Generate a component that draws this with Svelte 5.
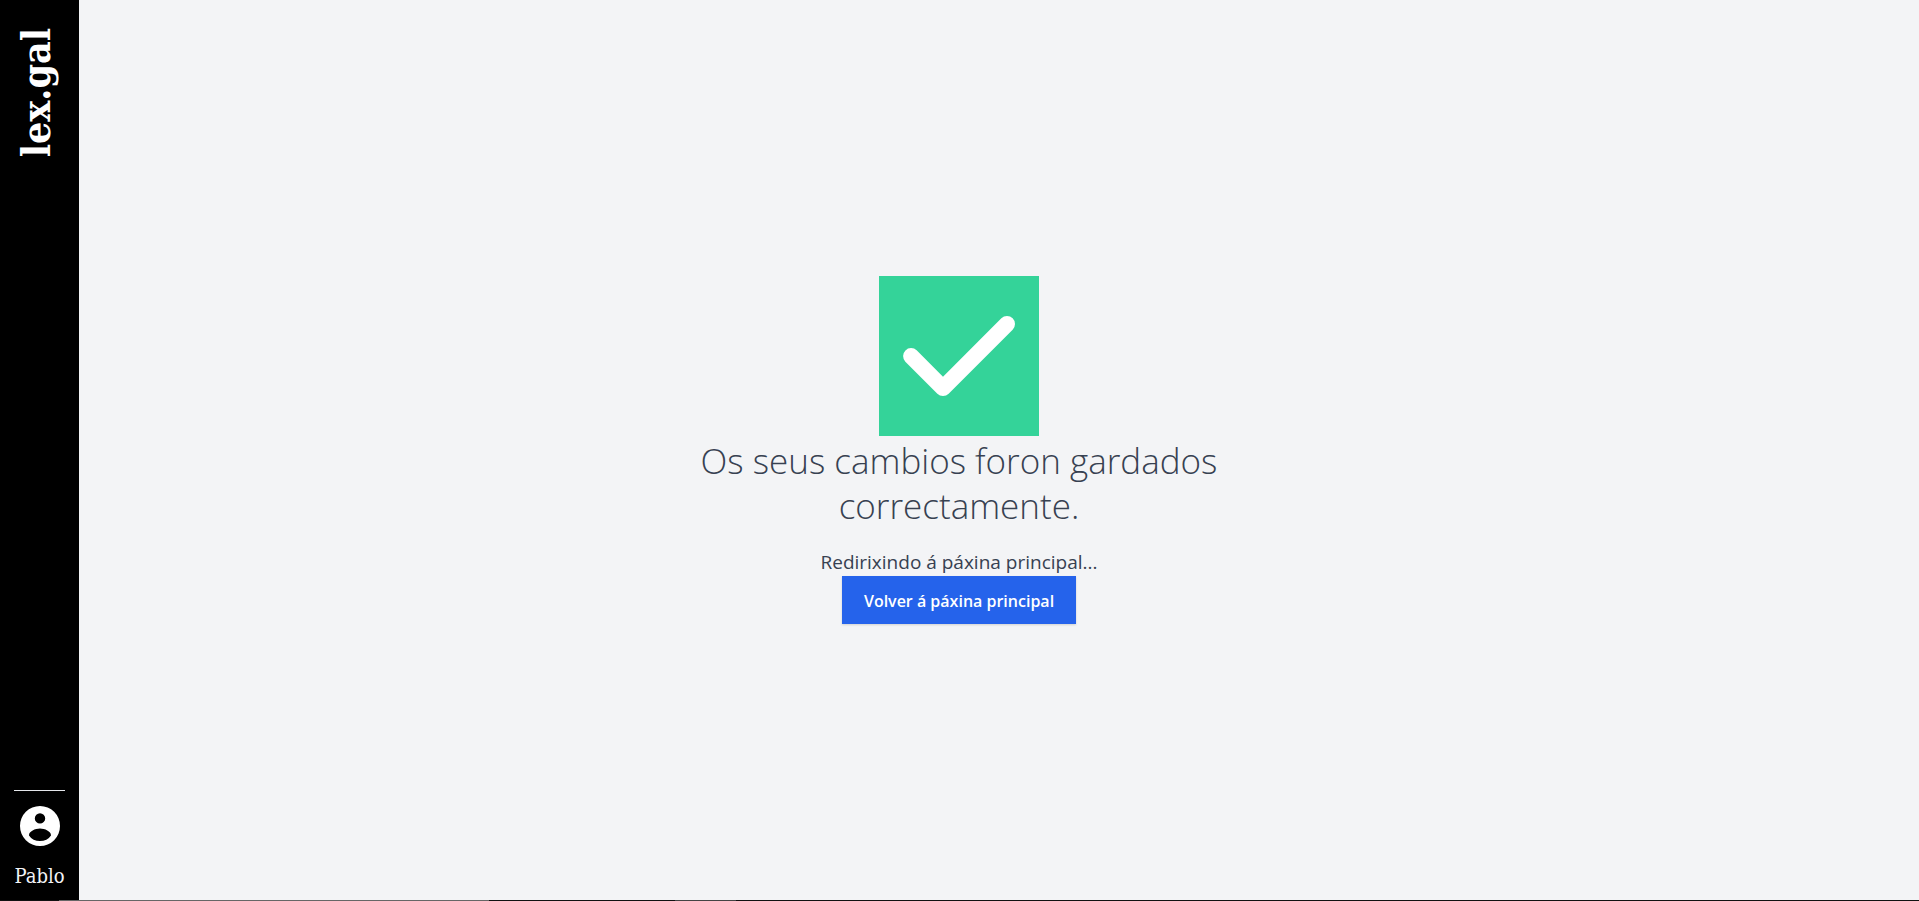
<script>
  const user = 'Pablo';
</script>

<div class="page">
  <aside class="sidebar">
    <a class="brand" href="#inicio">lex.gal</a>
    <a class="account" href="#conta">
      <svg viewBox="0 0 24 24" aria-hidden="true">
        <path fill="currentColor" fill-rule="evenodd" d="M12 2a10 10 0 1 0 0 20 10 10 0 0 0 0-20zm0 3.600a2.600 2.600 0 1 1 0 5.200 2.600 2.600 0 0 1 0-5.200zM6.500 16.700C6.500 14.700 9.600 13.300 12 13.300s5.500 1.400 5.500 3.400C16.300 18.600 14.300 19.500 12 19.500s-4.300-.9-5.500-2.800z" />
      </svg>
      <span>{user}</span>
    </a>
  </aside>

  <main class="content">
    <svg class="check" viewBox="0 0 20 20" aria-hidden="true">
      <path fill="currentColor" fill-rule="evenodd" d="M16.707 5.293a1 1 0 010 1.414l-8 8a1 1 0 01-1.414 0l-4-4a1 1 0 011.414-1.414L8 12.586l7.293-7.293a1 1 0 011.414 0z" clip-rule="evenodd" />
    </svg>
    <h1>Os seus cambios foron gardados correctamente.</h1>
    <p>Redirixindo á páxina principal...</p>
    <button type="button">Volver á páxina principal</button>
  </main>

  <div class="edge" aria-hidden="true">
    <i></i><i></i><i></i><i></i><i></i>
  </div>
</div>

<style>
  :global(body) {
    margin: 0;
    background: #f3f4f6;
  }

  .page {
    display: grid;
    grid-template-rows: minmax(0, 1fr) 1px;
    grid-template-columns: auto 1fr;
    height: 100vh;
    color: #374151;
    font-family: "Open Sans", "Noto Sans", sans-serif;
  }

  .sidebar {
    grid-area: 1 / 1;
    z-index: 1;
    display: flex;
    flex-direction: column;
    justify-content: space-between;
    align-items: center;
    box-sizing: border-box;
    min-width: 79px;
    padding: 28px 14px 10px;
    background: #000;
    font-family: "DejaVu Serif Condensed", "DejaVu Serif", serif;
  }

  .brand {
    writing-mode: vertical-rl;
    transform: rotate(180deg);
    padding-left: 8px;
    color: #fff;
    font-size: 39px;
    line-height: 40px;
    font-weight: 700;
    text-decoration: none;
  }

  .account {
    display: flex;
    flex-direction: column;
    align-items: center;
    align-self: stretch;
    gap: 12px;
    padding-top: 11px;
    border-top: 1px solid #e5e7eb;
    color: #fff;
    font-size: 20px;
    line-height: 28px;
    text-decoration: none;
  }

  .account svg {
    width: 48px;
    height: 48px;
  }

  .account span {
    color: #f3f4f6;
  }

  .content {
    grid-area: 1 / 1 / 2 / 3;
    display: flex;
    flex-direction: column;
    align-items: center;
    justify-content: center;
    padding-right: 1px;
    text-align: center;
  }

  .check {
    width: 160px;
    height: 160px;
    background: #34d399;
    color: #fff;
  }

  h1 {
    max-width: 576px;
    margin: 2px 0 20px;
    font-size: 35px;
    line-height: 45px;
    font-weight: 300;
  }

  p {
    margin: 0;
    font-size: 19px;
    line-height: 28px;
  }

  button {
    padding: 13px 22px 11px;
    border: 0;
    background: #2563eb;
    color: #fff;
    font: 600 16px/24px "Open Sans", "Noto Sans", sans-serif;
    box-shadow: 0 1px 2px rgba(0, 0, 0, 0.15);
    cursor: pointer;
  }

  .edge {
    grid-area: 2 / 1 / 3 / 3;
    display: grid;
    grid-template-columns: 59fr 430fr 186fr 61fr 1183fr;
    background: #111;
  }

  .edge i:nth-child(2) {
    background: #666;
  }

  .edge i:nth-child(4) {
    background: #444;
  }
</style>
